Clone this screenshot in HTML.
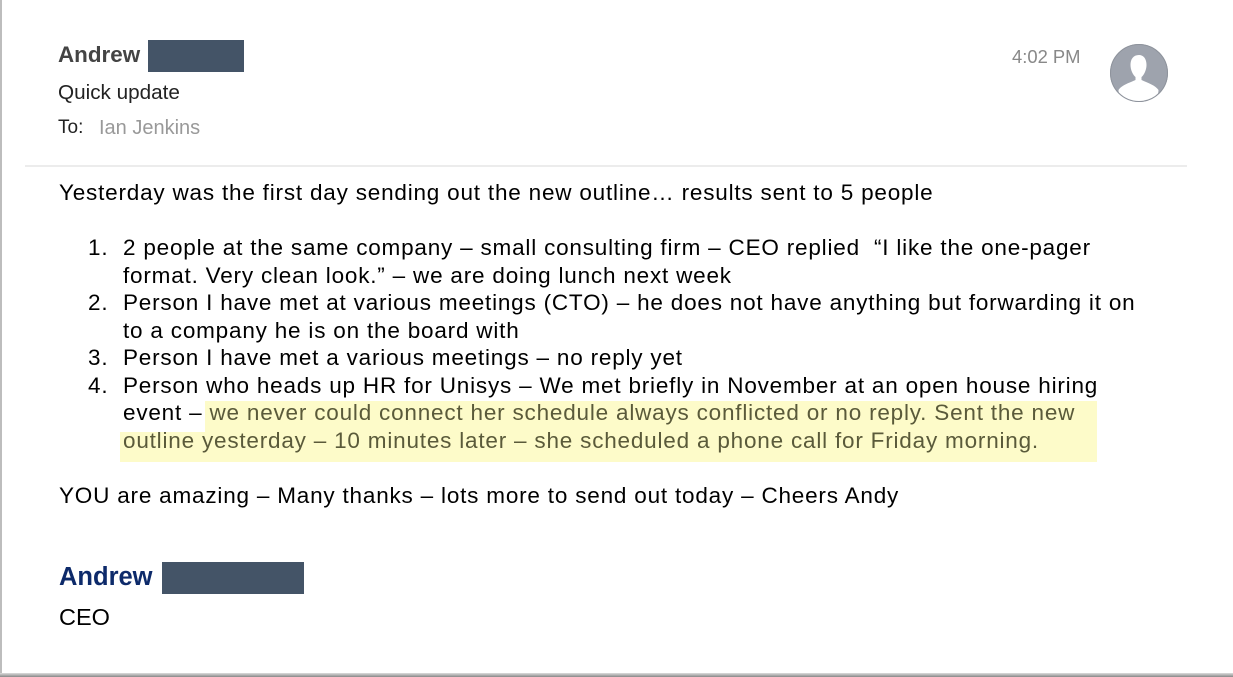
<!DOCTYPE html>
<html><head><meta charset="utf-8"><style>
body{margin:0;width:1233px;height:677px;overflow:hidden;background:#fff;font-family:"Liberation Sans",Arial,sans-serif;position:relative}
.a{position:absolute;white-space:nowrap}
.b{font-size:22.5px;color:#000;line-height:28px;letter-spacing:0.8px}
.hl{background:#fdfbc9;color:#5a5a3a}
</style></head><body>
<div class="a" style="left:0;top:0;width:2px;height:677px;background:#bdbdbd"></div>
<div class="a" style="left:0;top:673px;width:1233px;height:4px;background:linear-gradient(#ddd,#888)"></div>
<div class="a" style="left:58px;top:42px;font-size:22.4px;font-weight:bold;color:#444">Andrew</div>
<div class="a" style="left:148px;top:40px;width:96px;height:32px;background:#445467"></div>
<div class="a" style="left:58px;top:81px;font-size:20.7px;color:#222">Quick update</div>
<div class="a" style="left:58px;top:117px;font-size:19px;color:#222">To:</div>
<div class="a" style="left:99px;top:117px;font-size:20px;color:#999">Ian Jenkins</div>
<div class="a" style="left:1012px;top:46px;font-size:18.4px;color:#888">4:02 PM</div>
<svg class="a" style="left:1109px;top:43px" width="60" height="60" viewBox="0 0 60 60">
<defs><clipPath id="c"><circle cx="30" cy="30" r="28.5"/></clipPath></defs>
<circle cx="30" cy="30" r="29" fill="#9ea3ad"/>
<g clip-path="url(#c)" fill="#fff"><path d="M30 12c-6 0-8.5 4.5-8.5 10 0 5 2.5 10 5 12v3c-4 2-14 5-17 10 0 10 10 13 20 13s20-3 20-13c-3-5-13-8-17-10v-3c2.5-2 5-7 5-12 0-5.5-2.5-10-7.5-10z"/></g>
<circle cx="30" cy="30" r="28.5" fill="none" stroke="#8e939c" stroke-width="1"/>
</svg>
<div class="a" style="left:25px;top:165px;width:1162px;height:2px;background:#ececec"></div>
<div class="a b" style="left:59px;top:179px">Yesterday was the first day sending out the new outline… results sent to 5 people</div>
<div class="a hl" style="left:205px;top:401px;width:892px;height:31px"></div>
<div class="a hl" style="left:120px;top:432px;width:977px;height:30px"></div>
<div class="a b" style="left:88px;top:234px">1.</div>
<div class="a b" style="left:123px;top:234px">2 people at the same company – small consulting firm – CEO replied &nbsp;“I like the one-pager</div>
<div class="a b" style="left:123px;top:262px">format. Very clean look.” – we are doing lunch next week</div>
<div class="a b" style="left:88px;top:289px">2.</div>
<div class="a b" style="left:123px;top:289px">Person I have met at various meetings (CTO) – he does not have anything but forwarding it on</div>
<div class="a b" style="left:123px;top:317px">to a company he is on the board with</div>
<div class="a b" style="left:88px;top:344px">3.</div>
<div class="a b" style="left:123px;top:344px">Person I have met a various meetings – no reply yet</div>
<div class="a b" style="left:88px;top:372px">4.</div>
<div class="a b" style="left:123px;top:372px">Person who heads up HR for Unisys – We met briefly in November at an open house hiring</div>
<div class="a b" style="left:123px;top:399px">event – <span style="color:#5a5a3a">we never could connect her schedule always conflicted or no reply. Sent the new</span></div>
<div class="a b" style="left:123px;top:427px;color:#5a5a3a">outline yesterday – 10 minutes later – she scheduled a phone call for Friday morning.</div>
<div class="a b" style="left:59px;top:482px">YOU are amazing – Many thanks – lots more to send out today – Cheers Andy</div>
<div class="a" style="left:59px;top:563px;font-size:25.5px;font-weight:bold;color:#0d2a6a">Andrew</div>
<div class="a" style="left:162px;top:562px;width:142px;height:32px;background:#445467"></div>
<div class="a" style="left:59px;top:604px;font-size:23.5px;color:#000">CEO</div>
</body></html>
